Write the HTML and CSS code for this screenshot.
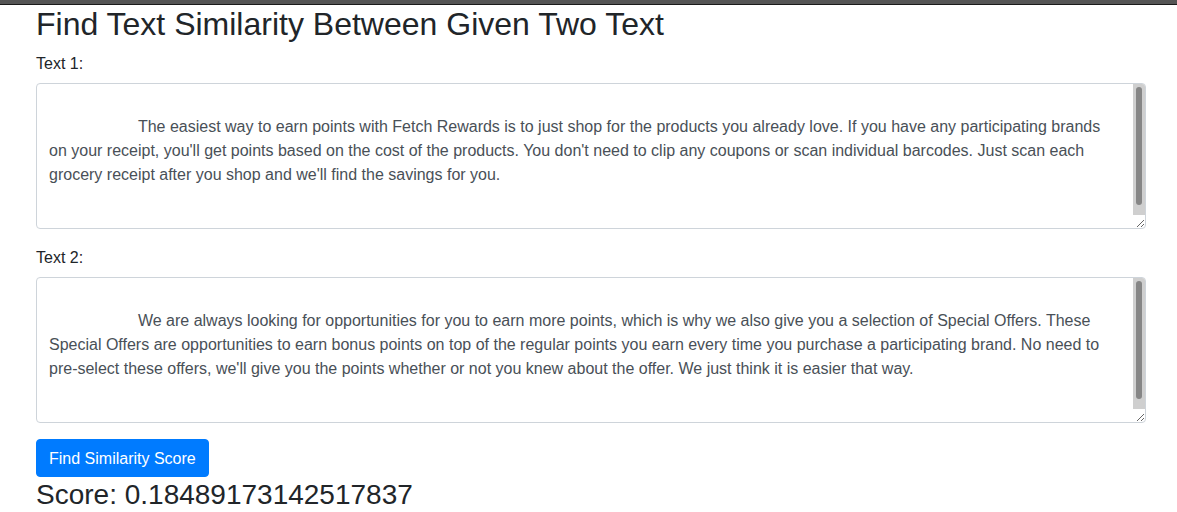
FILE: index.html
```html
<!DOCTYPE html>
<html lang="en">
<head>
<meta charset="utf-8">
<title>Find Text Similarity</title>
<link rel="stylesheet" href="styles.css">
</head>
<body>
<div class="topbar"></div>
<div class="container">
  <h2 class="title">Find Text Similarity Between Given Two Text</h2>
  <form class="form">
    <div class="form-group">
      <label class="label" for="t1">Text 1:</label>
      <div class="field">
        <textarea id="t1" class="form-control">

                    The easiest way to earn points with Fetch Rewards is to just shop for the products you already love. If you have any participating brands on your receipt, you'll get points based on the cost of the products. You don't need to clip any coupons or scan individual barcodes. Just scan each grocery receipt after you shop and we'll find the savings for you.
</textarea>
        <div class="scrollbar"><div class="thumb"></div></div>
      </div>
    </div>
    <div class="form-group">
      <label class="label" for="t2">Text 2:</label>
      <div class="field">
        <textarea id="t2" class="form-control">

                    We are always looking for opportunities for you to earn more points, which is why we also give you a selection of Special Offers. These Special Offers are opportunities to earn bonus points on top of the regular points you earn every time you purchase a participating brand. No need to pre-select these offers, we'll give you the points whether or not you knew about the offer. We just think it is easier that way.
</textarea>
        <div class="scrollbar"><div class="thumb"></div></div>
      </div>
    </div>
    <button type="button" class="btn">Find Similarity Score</button>
  </form>
  <h3 class="score">Score: 0.18489173142517837</h3>
</div>
</body>
</html>
```

FILE: styles.css
```css
html, body {
  margin: 0;
  padding: 0;
  background: #fff;
}
body {
  font-family: "Liberation Sans", Arial, sans-serif;
  font-size: 16px;
  line-height: 1.5;
  color: #212529;
  overflow: hidden;
}
.topbar {
  height: 4px;
  background: #555555;
  border-bottom: 1px solid #1a1a1a;
}
.container {
  width: 1110px;
  margin-left: 36px;
}
.title {
  margin: 0 0 8px 0;
  font-size: 32px;
  font-weight: 500;
  line-height: 1.2;
}
.form {
  margin: 0;
}
.form-group {
  margin-bottom: 16px;
}
.label {
  display: inline-block;
  padding-top: 1px;
  margin-bottom: 7px;
}
.field {
  position: relative;
}
.form-control {
  display: block;
  box-sizing: border-box;
  width: 100%;
  height: 146px;
  margin: 0;
  padding: 7px 24px 5px 12px;
  font-family: inherit;
  font-size: 16px;
  line-height: 1.5;
  color: #495057;
  background: #fff;
  border: 1px solid #ced4da;
  border-radius: 4px;
  overflow: hidden;
  resize: vertical;
}
.scrollbar {
  position: absolute;
  top: 1px;
  right: 1px;
  width: 12px;
  height: 131px;
  background: #cfcfcf;
  border-top-right-radius: 3px;
}
.thumb {
  position: absolute;
  top: 3px;
  left: 3px;
  width: 6px;
  height: 118px;
  background: #868686;
  border-radius: 3px;
}
.btn {
  display: inline-block;
  margin: 0;
  padding: 7px 12px 5px 12px;
  font-family: inherit;
  font-size: 16px;
  line-height: 1.5;
  color: #fff;
  background: #007bff;
  border: 1px solid #007bff;
  border-radius: 4px;
  cursor: pointer;
}
.score {
  margin: 0;
  padding-top: 1px;
  font-size: 28px;
  font-weight: 500;
  line-height: 1.2;
}
```
